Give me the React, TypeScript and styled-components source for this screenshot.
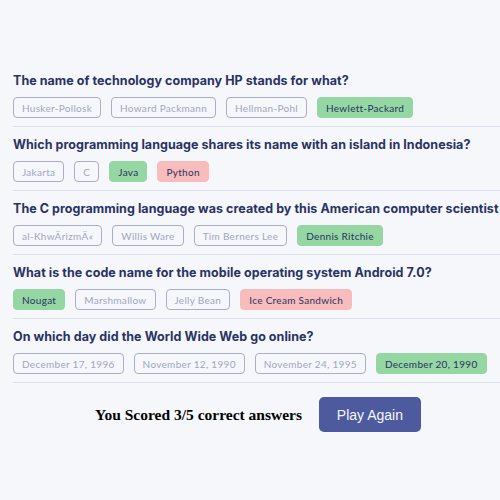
import React from "react";
import styled, { createGlobalStyle } from "styled-components";

const Global = createGlobalStyle`
  html, body { margin: 0; padding: 0; background: #F5F7FB; overflow: hidden; }
  body { width: 500px; height: 500px; }
`;

const Page = styled.div`
  width: 490px;
  padding: 63px 0 0 13px;
  box-sizing: content-box;
`;

const List = styled.div`
  display: flex;
  flex-direction: column;
`;

const Block = styled.div`
  padding-top: 10px;
  border-bottom: 1px solid #DBDEF0;
  padding-bottom: 8px;
`;

const Title = styled.h2`
  margin: 0 0 8px 0;
  font-family: Inter, "Noto Sans", sans-serif;
  font-weight: 700;
  font-size: 12.5px;
  letter-spacing: 0.05px;
  line-height: 16px;
  color: #293264;
  white-space: nowrap;
`;

const Answers = styled.div`
  display: flex;
  gap: 10px;
`;

type Kind = "idle" | "right" | "wrong";

const Answer = styled.div<{ $kind: Kind }>`
  box-sizing: border-box;
  height: 21px;
  padding: 0 8px;
  display: flex;
  align-items: center;
  border-radius: 4px;
  font-family: Lato, Inter, sans-serif;
  font-size: 10px;
  letter-spacing: 0.3px;
  white-space: nowrap;
  border: 1px solid
    ${(p) => (p.$kind === "right" ? "#94D7A2" : p.$kind === "wrong" ? "#F8BCBC" : "#A9ADC9")};
  background: ${(p) => (p.$kind === "right" ? "#94D7A2" : p.$kind === "wrong" ? "#F8BCBC" : "transparent")};
  color: ${(p) => (p.$kind === "idle" ? "#A2A6C0" : "#293264")};
`;

const Footer = styled.div`
  display: flex;
  align-items: center;
  justify-content: center;
  gap: 17px;
  margin-top: 14px;
`;

const Score = styled.span`
  font-family: "Liberation Serif", serif;
  font-weight: 700;
  font-size: 15.5px;
  color: #000;
`;

const PlayButton = styled.button`
  width: 102px;
  height: 35px;
  border: none;
  border-radius: 5px;
  background: #4D5B9E;
  color: #F5F7FB;
  font-family: "Liberation Sans", Arial, sans-serif;
  font-size: 14px;
  cursor: pointer;
`;

const questions: { q: string; a: [string, Kind][] }[] = [
  {
    q: "The name of technology company HP stands for what?",
    a: [["Husker-Pollosk", "idle"], ["Howard Packmann", "idle"], ["Hellman-Pohl", "idle"], ["Hewlett-Packard", "right"]],
  },
  {
    q: "Which programming language shares its name with an island in Indonesia?",
    a: [["Jakarta", "idle"], ["C", "idle"], ["Java", "right"], ["Python", "wrong"]],
  },
  {
    q: "The C programming language was created by this American computer scientist",
    a: [["al-KhwÄrizmÄ«", "idle"], ["Willis Ware", "idle"], ["Tim Berners Lee", "idle"], ["Dennis Ritchie", "right"]],
  },
  {
    q: "What is the code name for the mobile operating system Android 7.0?",
    a: [["Nougat", "right"], ["Marshmallow", "idle"], ["Jelly Bean", "idle"], ["Ice Cream Sandwich", "wrong"]],
  },
  {
    q: "On which day did the World Wide Web go online?",
    a: [["December 17, 1996", "idle"], ["November 12, 1990", "idle"], ["November 24, 1995", "idle"], ["December 20, 1990", "right"]],
  },
];

export default function App() {
  return (
    <>
      <Global />
      <Page>
        <List>
          {questions.map((item) => (
            <Block key={item.q}>
              <Title>{item.q}</Title>
              <Answers>
                {item.a.map(([text, kind]) => (
                  <Answer key={text} $kind={kind}>{text}</Answer>
                ))}
              </Answers>
            </Block>
          ))}
        </List>
        <Footer>
          <Score>You Scored 3/5 correct answers</Score>
          <PlayButton>Play Again</PlayButton>
        </Footer>
      </Page>
    </>
  );
}
